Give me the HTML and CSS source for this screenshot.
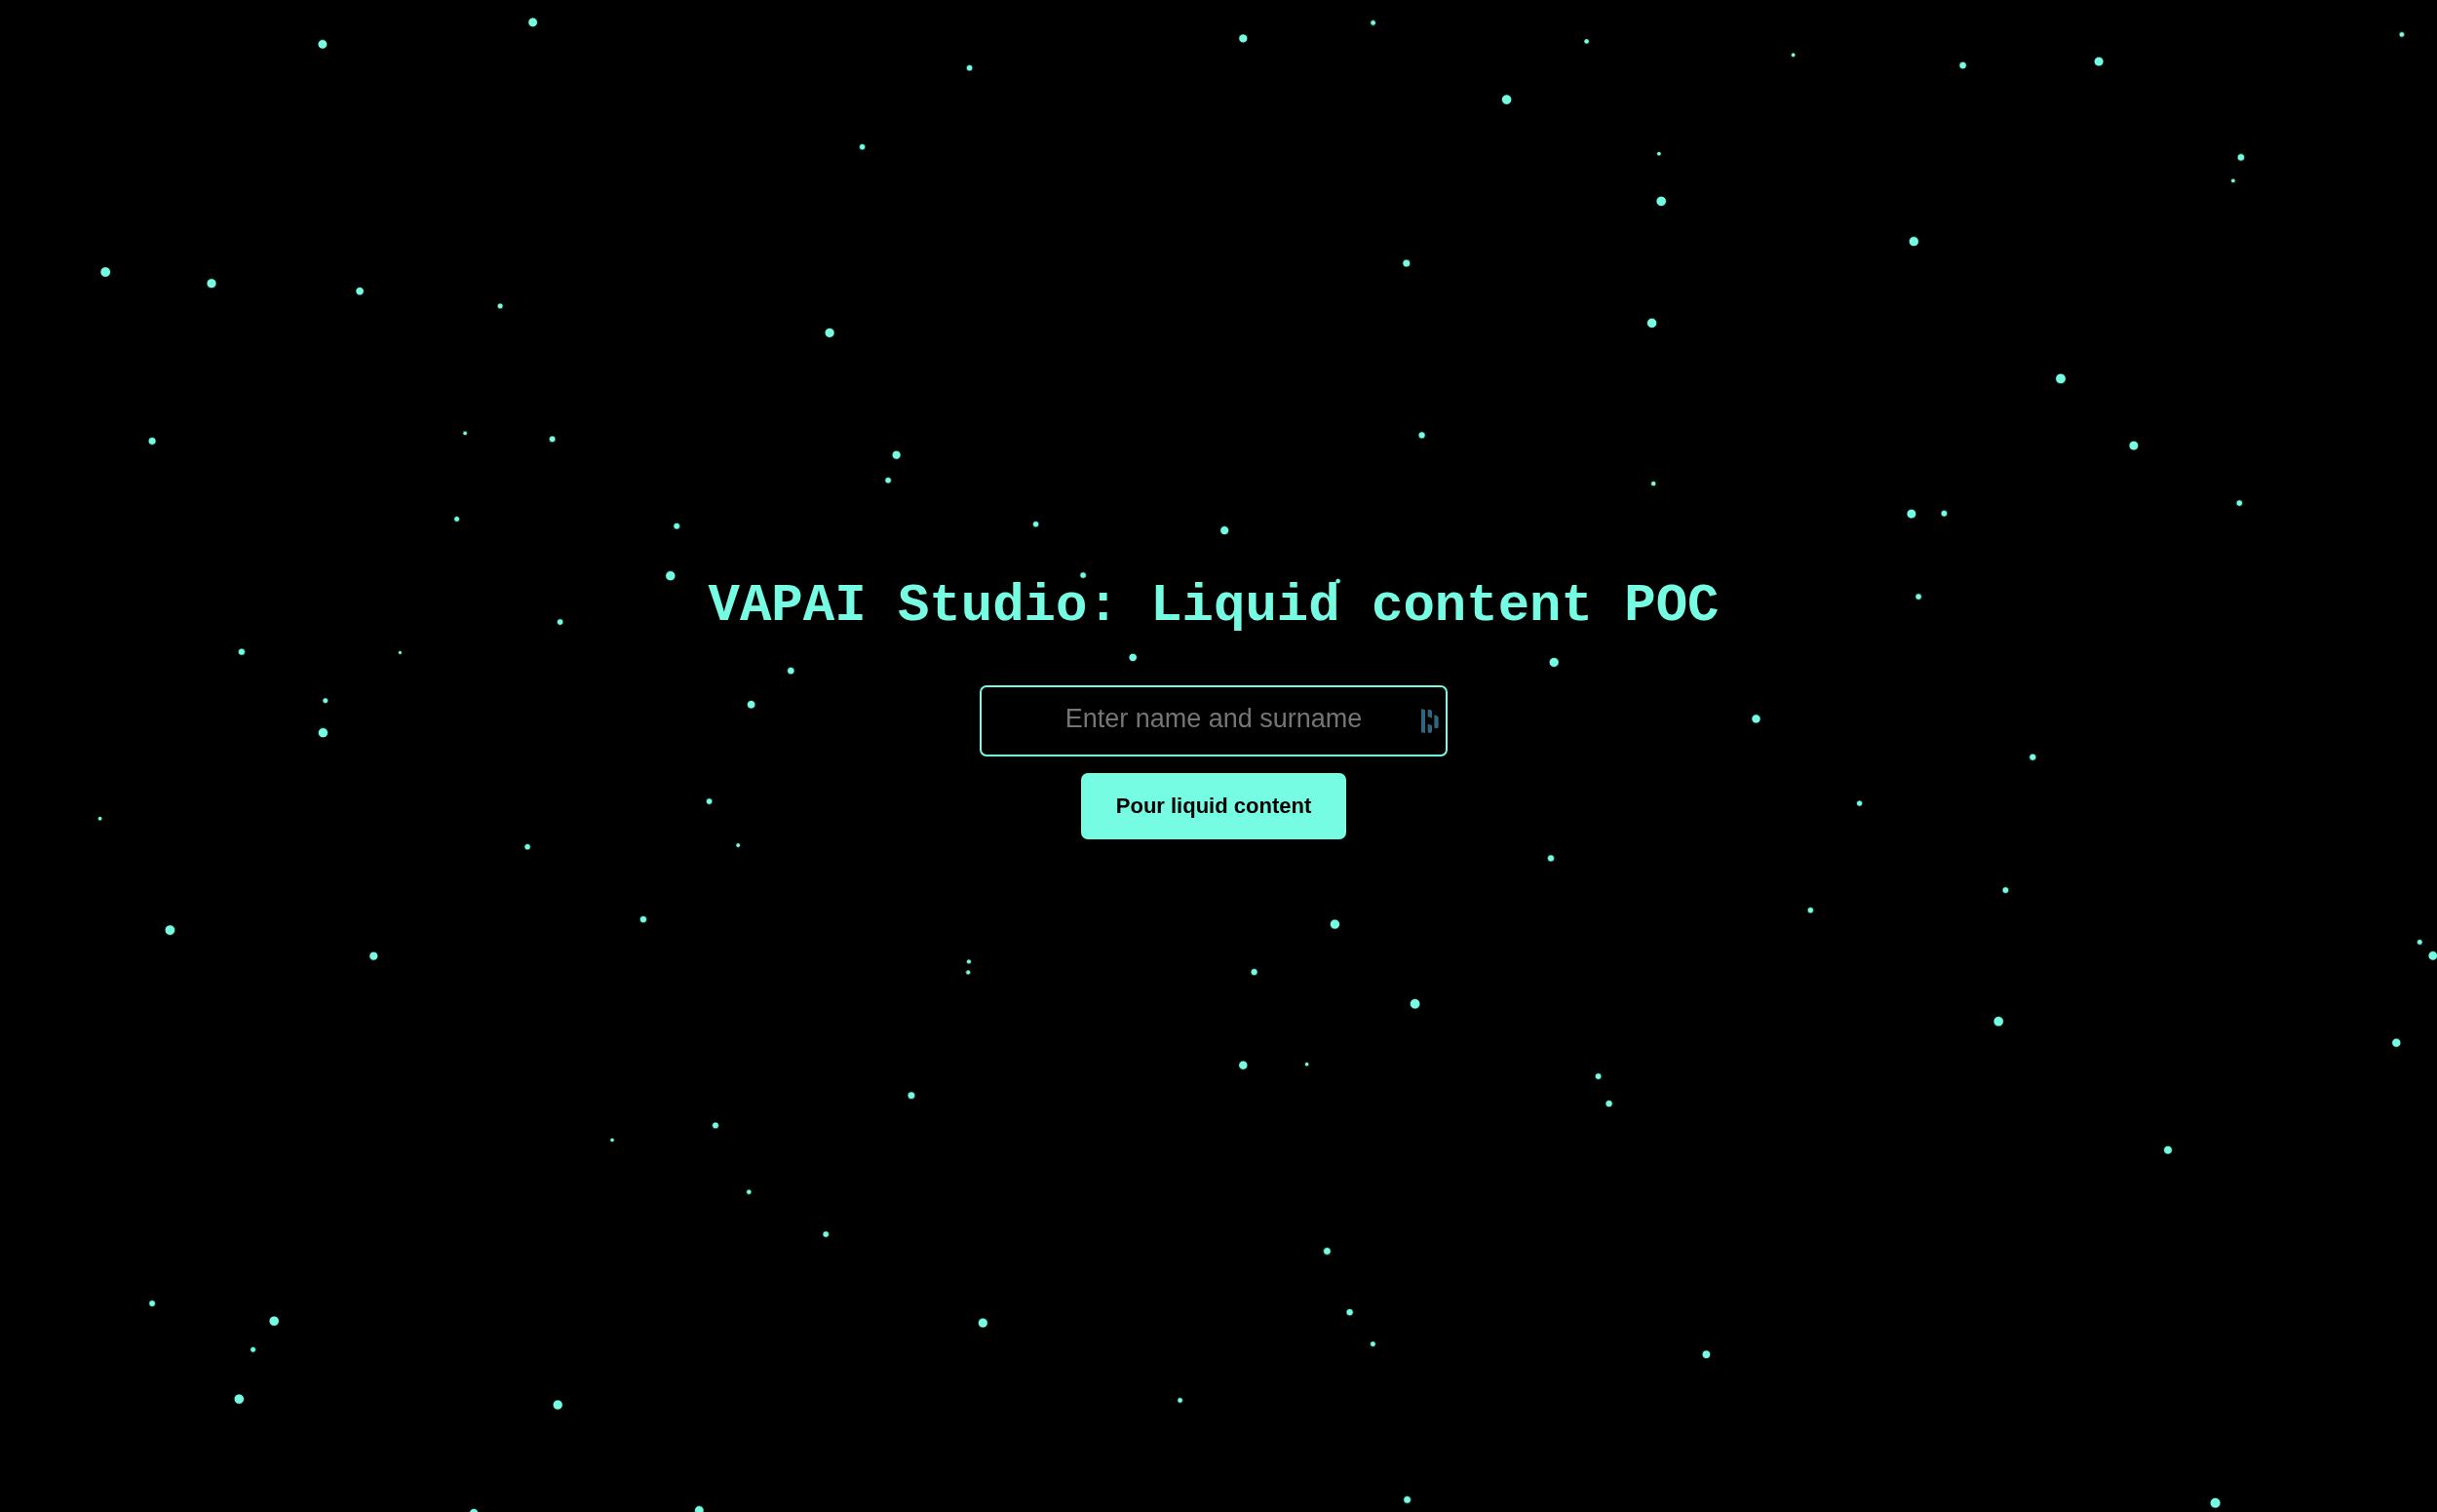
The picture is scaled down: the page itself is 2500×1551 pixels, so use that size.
FILE: index.html
```html
<!DOCTYPE html>
<html lang="en">
<head>
<meta charset="utf-8">
<meta name="viewport" content="width=device-width, initial-scale=1">
<title>VAPAI Studio: Liquid content POC</title>
<link rel="stylesheet" href="styles.css">
</head>
<body>
<svg class="particles" viewBox="0 0 2500 1551" preserveAspectRatio="xMidYMid slice" aria-hidden="true">
<g transform="translate(0.6 0.4)">
<circle cx="546" cy="22.5" r="4.8"/><circle cx="330.3" cy="45" r="4.8"/><circle cx="994" cy="69.3" r="3.3"/><circle cx="884" cy="150.3" r="3.2"/>
<circle cx="107.6" cy="278.6" r="5.3"/><circle cx="216.4" cy="290.3" r="5"/><circle cx="368.5" cy="298.3" r="4.2"/><circle cx="512.5" cy="313.5" r="3"/>
<circle cx="850.5" cy="341" r="5"/><circle cx="155.5" cy="452" r="4"/><circle cx="476.5" cy="444" r="2.3"/><circle cx="566" cy="450" r="3.4"/>
<circle cx="919" cy="466.3" r="4.5"/><circle cx="910.5" cy="492.3" r="3.3"/><circle cx="1274.7" cy="39" r="4.5"/><circle cx="1408" cy="23" r="2.8"/>
<circle cx="1627" cy="42" r="2.7"/><circle cx="1839" cy="56" r="2.3"/><circle cx="2013" cy="66.7" r="3.8"/><circle cx="2152.5" cy="62.7" r="4.9"/>
<circle cx="2463.3" cy="35" r="2.8"/><circle cx="1545" cy="101.7" r="5.2"/><circle cx="1701.3" cy="157.3" r="2.3"/><circle cx="2298.3" cy="161" r="3.8"/>
<circle cx="2290.3" cy="185" r="2.3"/><circle cx="1703.6" cy="206" r="5.2"/><circle cx="1962.7" cy="247.3" r="5.1"/><circle cx="1442.2" cy="269.7" r="4"/>
<circle cx="1694" cy="331" r="5.1"/><circle cx="2113.4" cy="388" r="5.3"/><circle cx="1458" cy="446" r="3.6"/><circle cx="2188.3" cy="456.7" r="4.9"/>
<circle cx="1695.6" cy="495.7" r="2.7"/><circle cx="2296.7" cy="515.7" r="3.3"/><circle cx="468" cy="532" r="2.9"/><circle cx="693.6" cy="539.3" r="3.4"/>
<circle cx="1062" cy="537.3" r="3.2"/><circle cx="687.2" cy="590.3" r="5.1"/><circle cx="1110.5" cy="589.7" r="3.3"/><circle cx="574" cy="637.7" r="3.3"/>
<circle cx="247.3" cy="668.3" r="3.6"/><circle cx="409.8" cy="669" r="2"/><circle cx="1161.6" cy="674" r="4.2"/><circle cx="810.7" cy="687.7" r="3.8"/>
<circle cx="333.2" cy="718.3" r="2.9"/><circle cx="770" cy="722.3" r="4.3"/><circle cx="330.8" cy="751.3" r="5.1"/><circle cx="727" cy="821.7" r="3.3"/>
<circle cx="102" cy="839.3" r="2.3"/><circle cx="540.5" cy="868.3" r="3.2"/><circle cx="756.6" cy="866.7" r="2.4"/><circle cx="173.8" cy="953.7" r="5.3"/>
<circle cx="659.3" cy="942.7" r="3.7"/><circle cx="382.7" cy="980.3" r="4.5"/><circle cx="993.3" cy="986" r="2.5"/><circle cx="992.6" cy="997" r="2.5"/>
<circle cx="1255.6" cy="543.7" r="4.5"/><circle cx="1372" cy="595.7" r="2.7"/><circle cx="1593.6" cy="679" r="5"/><circle cx="1960.3" cy="526.7" r="4.9"/>
<circle cx="1993.8" cy="526.3" r="3.4"/><circle cx="1967.5" cy="611.7" r="3.3"/><circle cx="1800.9" cy="737" r="4.6"/><circle cx="2084.7" cy="776.3" r="3.6"/>
<circle cx="1907" cy="823.7" r="3.1"/><circle cx="1590.4" cy="880" r="3.6"/><circle cx="1856.7" cy="933.3" r="3.2"/><circle cx="2056.8" cy="912.7" r="3.4"/>
<circle cx="1368.8" cy="947.7" r="5.1"/><circle cx="2481.7" cy="966" r="2.9"/><circle cx="2495.2" cy="980" r="4.8"/><circle cx="1286" cy="996.7" r="3.6"/>
<circle cx="1451" cy="1029.3" r="5.3"/><circle cx="934.3" cy="1123.3" r="3.9"/><circle cx="733.4" cy="1154" r="3.5"/><circle cx="627.4" cy="1169" r="2.2"/>
<circle cx="767.7" cy="1222.3" r="2.7"/><circle cx="846.6" cy="1265.7" r="3.3"/><circle cx="155.5" cy="1336.7" r="3.4"/><circle cx="280.6" cy="1354.7" r="5.2"/>
<circle cx="1007.7" cy="1356.7" r="5"/><circle cx="259" cy="1384" r="2.9"/><circle cx="244.7" cy="1434.7" r="5.2"/><circle cx="571.6" cy="1440.7" r="5.1"/>
<circle cx="1210" cy="1436" r="2.8"/><circle cx="485.5" cy="1551.5" r="4.5"/><circle cx="716.7" cy="1549" r="4.8"/><circle cx="2049.6" cy="1047.3" r="5.2"/>
<circle cx="2457.7" cy="1069.3" r="4.6"/><circle cx="1274.7" cy="1092.3" r="4.6"/><circle cx="1340" cy="1091.3" r="2.2"/><circle cx="1639" cy="1103.7" r="3.4"/>
<circle cx="1650" cy="1131.7" r="3.7"/><circle cx="2223.4" cy="1179.3" r="4.4"/><circle cx="1360.8" cy="1283" r="3.9"/><circle cx="1384" cy="1345.7" r="3.7"/>
<circle cx="1407.8" cy="1378.3" r="2.9"/><circle cx="1749.8" cy="1389" r="4.3"/><circle cx="1443" cy="1538" r="3.9"/><circle cx="2272" cy="1541.3" r="5.4"/>
</g>
</svg>
<main class="hero">
  <h1 class="title">VAPAI Studio: Liquid content POC</h1>
  <form class="form">
    <div class="field">
      <input class="name-input" type="text" name="name" placeholder="Enter name and surname" aria-label="Enter name and surname">
      <svg class="field-icon" viewBox="84 82 54 75" aria-hidden="true">
        <path d="M84 82l12 4v71l-12-2zM104 84l8 1 5 4v22l-13-5zM104 129l13 4v20l-5 4-8-2zM124 101l8 2 5 5v32l-5 3-8-2z"/>
      </svg>
    </div>
    <button class="submit" type="button">Pour liquid content</button>
  </form>
</main>
</body>
</html>
```
FILE: styles.css
```css
:root {
  --accent: #76fce2;
}

* {
  box-sizing: border-box;
}

body {
  margin: 0;
  background: #000;
  color: var(--accent);
  font-family: "Liberation Sans", Arial, sans-serif;
}

/* Decorative layer behind the form */
.particles {
  position: fixed;
  inset: 0;
  width: 100%;
  height: 100%;
  fill: var(--accent);
  stroke: #000;
  stroke-width: 0.7;
}

.hero {
  position: relative;
  display: flex;
  flex-direction: column;
  align-items: center;
  justify-content: center;
  gap: 51px;
  min-height: 100vh;
  padding: 0 10px 98px 0;
}

.title {
  margin: 0;
  font-family: "Courier New", "Liberation Mono", monospace;
  font-size: 54px;
  font-weight: 700;
  line-height: 60px;
  text-align: center;
}

.form {
  display: flex;
  flex-direction: column;
  align-items: center;
  gap: 17px;
  width: 480px;
  max-width: 100%;
}

.field {
  position: relative;
  width: 100%;
}

.name-input {
  display: block;
  width: 100%;
  padding: 17px 16px 21px;
  border: 2px solid var(--accent);
  border-radius: 7px;
  background: transparent;
  color: var(--accent);
  font: 27px/31px "Liberation Sans", Arial, sans-serif;
  text-align: center;
}

.name-input::placeholder {
  color: #757575;
  opacity: 1;
}

.field-icon {
  position: absolute;
  top: 24px;
  right: 9px;
  width: 18px;
  height: 25px;
  fill: #2f667b;
}

.submit {
  min-width: 272px;
  padding: 21px 32px;
  border: 0;
  border-radius: 7px;
  background: var(--accent);
  color: #000;
  font: 700 22px/26px "Liberation Sans", Arial, sans-serif;
  cursor: pointer;
}
```
